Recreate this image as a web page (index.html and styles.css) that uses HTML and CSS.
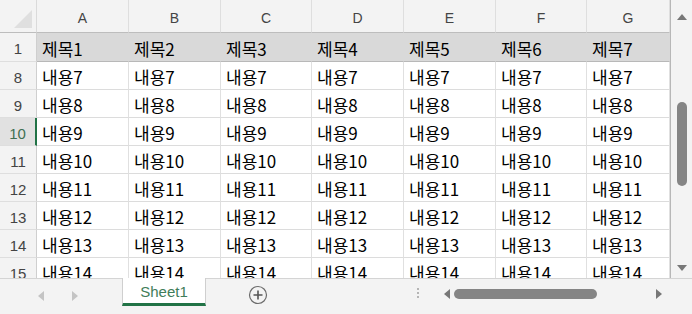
FILE: index.html
```html
<!DOCTYPE html>
<html lang="ko">
<head>
  <meta charset="UTF-8" />
  <title>Sheet1</title>
  <link rel="stylesheet" href="styles.css">
</head>
<body>

<div class="workbook">
  <div class="main">
    <div class="sheet">
      <div class="grid" id="grid">
        <div class="corner"><span class="corner-tri"></span></div>
        <div class="col-head">A</div>
        <div class="col-head">B</div>
        <div class="col-head">C</div>
        <div class="col-head">D</div>
        <div class="col-head">E</div>
        <div class="col-head">F</div>
        <div class="col-head">G</div>
      </div>
    </div>

    <div class="vscroll">
      <span class="arrow-up"></span>
      <div class="vtrack"><div class="vthumb"></div></div>
      <span class="arrow-down"></span>
    </div>
  </div>

  <div class="tabbar">
    <div class="tab-nav">
      <span class="nav-left"></span>
      <span class="nav-right"></span>
    </div>
    <div class="tab active">Sheet1</div>
    <div class="add-sheet">
      <svg width="20" height="20" viewBox="0 0 20 20">
        <circle cx="10" cy="10" r="8.5" fill="none" stroke="#6b6b6b" stroke-width="1.2"/>
        <path d="M10 5.5v9M5.5 10h9" stroke="#555" stroke-width="1.6"/>
      </svg>
    </div>
    <div class="splitter"><i></i><i></i><i></i></div>
    <div class="hscroll">
      <span class="nav-left dark"></span>
      <div class="htrack"><div class="hthumb"></div></div>
      <span class="nav-right dark"></span>
    </div>
  </div>
</div>

<script>
  // Build the visible rows: header row 1, then rows 8..15
  const grid = document.getElementById('grid');
  const rows = [1, 8, 9, 10, 11, 12, 13, 14, 15];

  rows.forEach((r) => {
    const head = document.createElement('div');
    head.classList.add('row-head');
    if (r === 10) head.classList.add('selected');
    head.textContent = r;
    grid.appendChild(head);

    for (let c = 1; c <= 7; c++) {
      const cell = document.createElement('div');
      cell.classList.add('cell');
      if (r === 1) {
        cell.classList.add('title');
        cell.textContent = '제목' + c;
      } else {
        cell.textContent = '내용' + (r - 1);
      }
      grid.appendChild(cell);
    }
  });
</script>

</body>
</html>
```

FILE: styles.css
```css
body {
  margin: 0;
  padding: 0;
  background: #fff;
  font-family: 'Noto Sans CJK KR', 'Noto Sans', sans-serif;
}

.workbook {
  width: 692px;
  height: 314px;
  overflow: hidden;
  display: flex;
  flex-direction: column;
}

.main {
  display: flex;
  height: 278px;
}

.sheet {
  width: 671px;
  height: 278px;
  overflow: hidden;
  border-right: 1px solid #b7b7b7;
  box-sizing: border-box;
}

.grid {
  display: grid;
  grid-template-columns: 37px 92px 92px 91px 92px 92px 91px 83px;
  grid-template-rows: 33px 29px repeat(8, 28px);
}

.corner {
  background: #f3f3f3;
  border-right: 1px solid #dadada;
  border-bottom: 1px solid #bdbdbd;
  position: relative;
}

.corner-tri {
  position: absolute;
  right: 4px;
  bottom: 4px;
  width: 0;
  height: 0;
  border-left: 18px solid transparent;
  border-bottom: 18px solid #dfdfdf;
}

.col-head {
  background: #f3f3f3;
  border-right: 1px solid #dedede;
  border-bottom: 1px solid #bdbdbd;
  color: #444;
  font-family: 'Liberation Sans', sans-serif;
  font-size: 14px;
  display: flex;
  align-items: center;
  justify-content: center;
  padding-top: 3px;
}

.row-head {
  background: #f3f3f3;
  border-right: 1px solid #cfcfcf;
  border-bottom: 1px solid #dedede;
  color: #444;
  font-family: 'Liberation Sans', sans-serif;
  font-size: 15px;
  display: flex;
  align-items: center;
  justify-content: center;
  padding-top: 3px;
}

.row-head.selected {
  background: #e1e1e1;
  color: #3f6f52;
  border-right: 2px solid #217346;
}

.cell {
  border-right: 1px solid #e0e0e0;
  border-bottom: 1px solid #dcdcdc;
  color: #000;
  font-size: 17px;
  padding: 2px 0 0 5px;
  display: flex;
  align-items: center;
  white-space: nowrap;
  overflow: hidden;
}

.cell.title {
  background: #d9d9d9;
  border-right-color: #d9d9d9;
  border-bottom: 1px solid #b8b8b8;
}

.vscroll {
  width: 21px;
  background: #f3f3f3;
  display: flex;
  flex-direction: column;
  align-items: center;
}

.arrow-up {
  margin-top: 14px;
  width: 0;
  height: 0;
  border-left: 5px solid transparent;
  border-right: 5px solid transparent;
  border-bottom: 6px solid #777;
}

.arrow-down {
  margin-bottom: 7px;
  width: 0;
  height: 0;
  border-left: 5px solid transparent;
  border-right: 5px solid transparent;
  border-top: 6px solid #777;
}

.vtrack {
  flex-grow: 1;
  width: 100%;
  display: flex;
  justify-content: center;
}

.vthumb {
  margin-top: 82px;
  width: 10px;
  height: 84px;
  border-radius: 5px;
  background: #858585;
}

.tabbar {
  flex-grow: 1;
  background: #f3f3f3;
  border-top: 1px solid #d4d4d4;
  display: flex;
  align-items: flex-start;
}

.tab-nav {
  width: 122px;
  height: 33px;
  display: flex;
  align-items: center;
  justify-content: center;
  gap: 28px;
  padding-right: 6px;
  box-sizing: border-box;
}

.nav-left {
  width: 0;
  height: 0;
  border-top: 5px solid transparent;
  border-bottom: 5px solid transparent;
  border-right: 6px solid #c4c4c4;
}

.nav-right {
  width: 0;
  height: 0;
  border-top: 5px solid transparent;
  border-bottom: 5px solid transparent;
  border-left: 6px solid #c4c4c4;
}

.nav-left.dark {
  border-right-color: #777;
}

.nav-right.dark {
  border-left-color: #777;
}

.tab {
  width: 84px;
  height: 28px;
  margin-top: -1px;
  box-sizing: border-box;
  background: #fff;
  border-left: 1px solid #cfcfcf;
  border-right: 1px solid #cfcfcf;
  border-bottom: 3px solid #217346;
  color: #3f7d5a;
  font-family: 'Liberation Sans', sans-serif;
  font-size: 15px;
  display: flex;
  align-items: center;
  justify-content: center;
  padding-top: 1px;
}

.add-sheet {
  margin-left: 42px;
  margin-top: 6px;
  width: 20px;
  height: 20px;
}

.splitter {
  margin-left: 149px;
  margin-top: 9px;
  display: flex;
  flex-direction: column;
  gap: 2px;
}

.splitter i {
  width: 2px;
  height: 2px;
  background: #b5b5b5;
}

.hscroll {
  margin-left: 25px;
  margin-top: 10px;
  display: flex;
  align-items: center;
  width: 218px;
}

.htrack {
  flex-grow: 1;
  padding-left: 4px;
}

.hthumb {
  width: 143px;
  height: 10px;
  border-radius: 5px;
  background: #858585;
}
```
